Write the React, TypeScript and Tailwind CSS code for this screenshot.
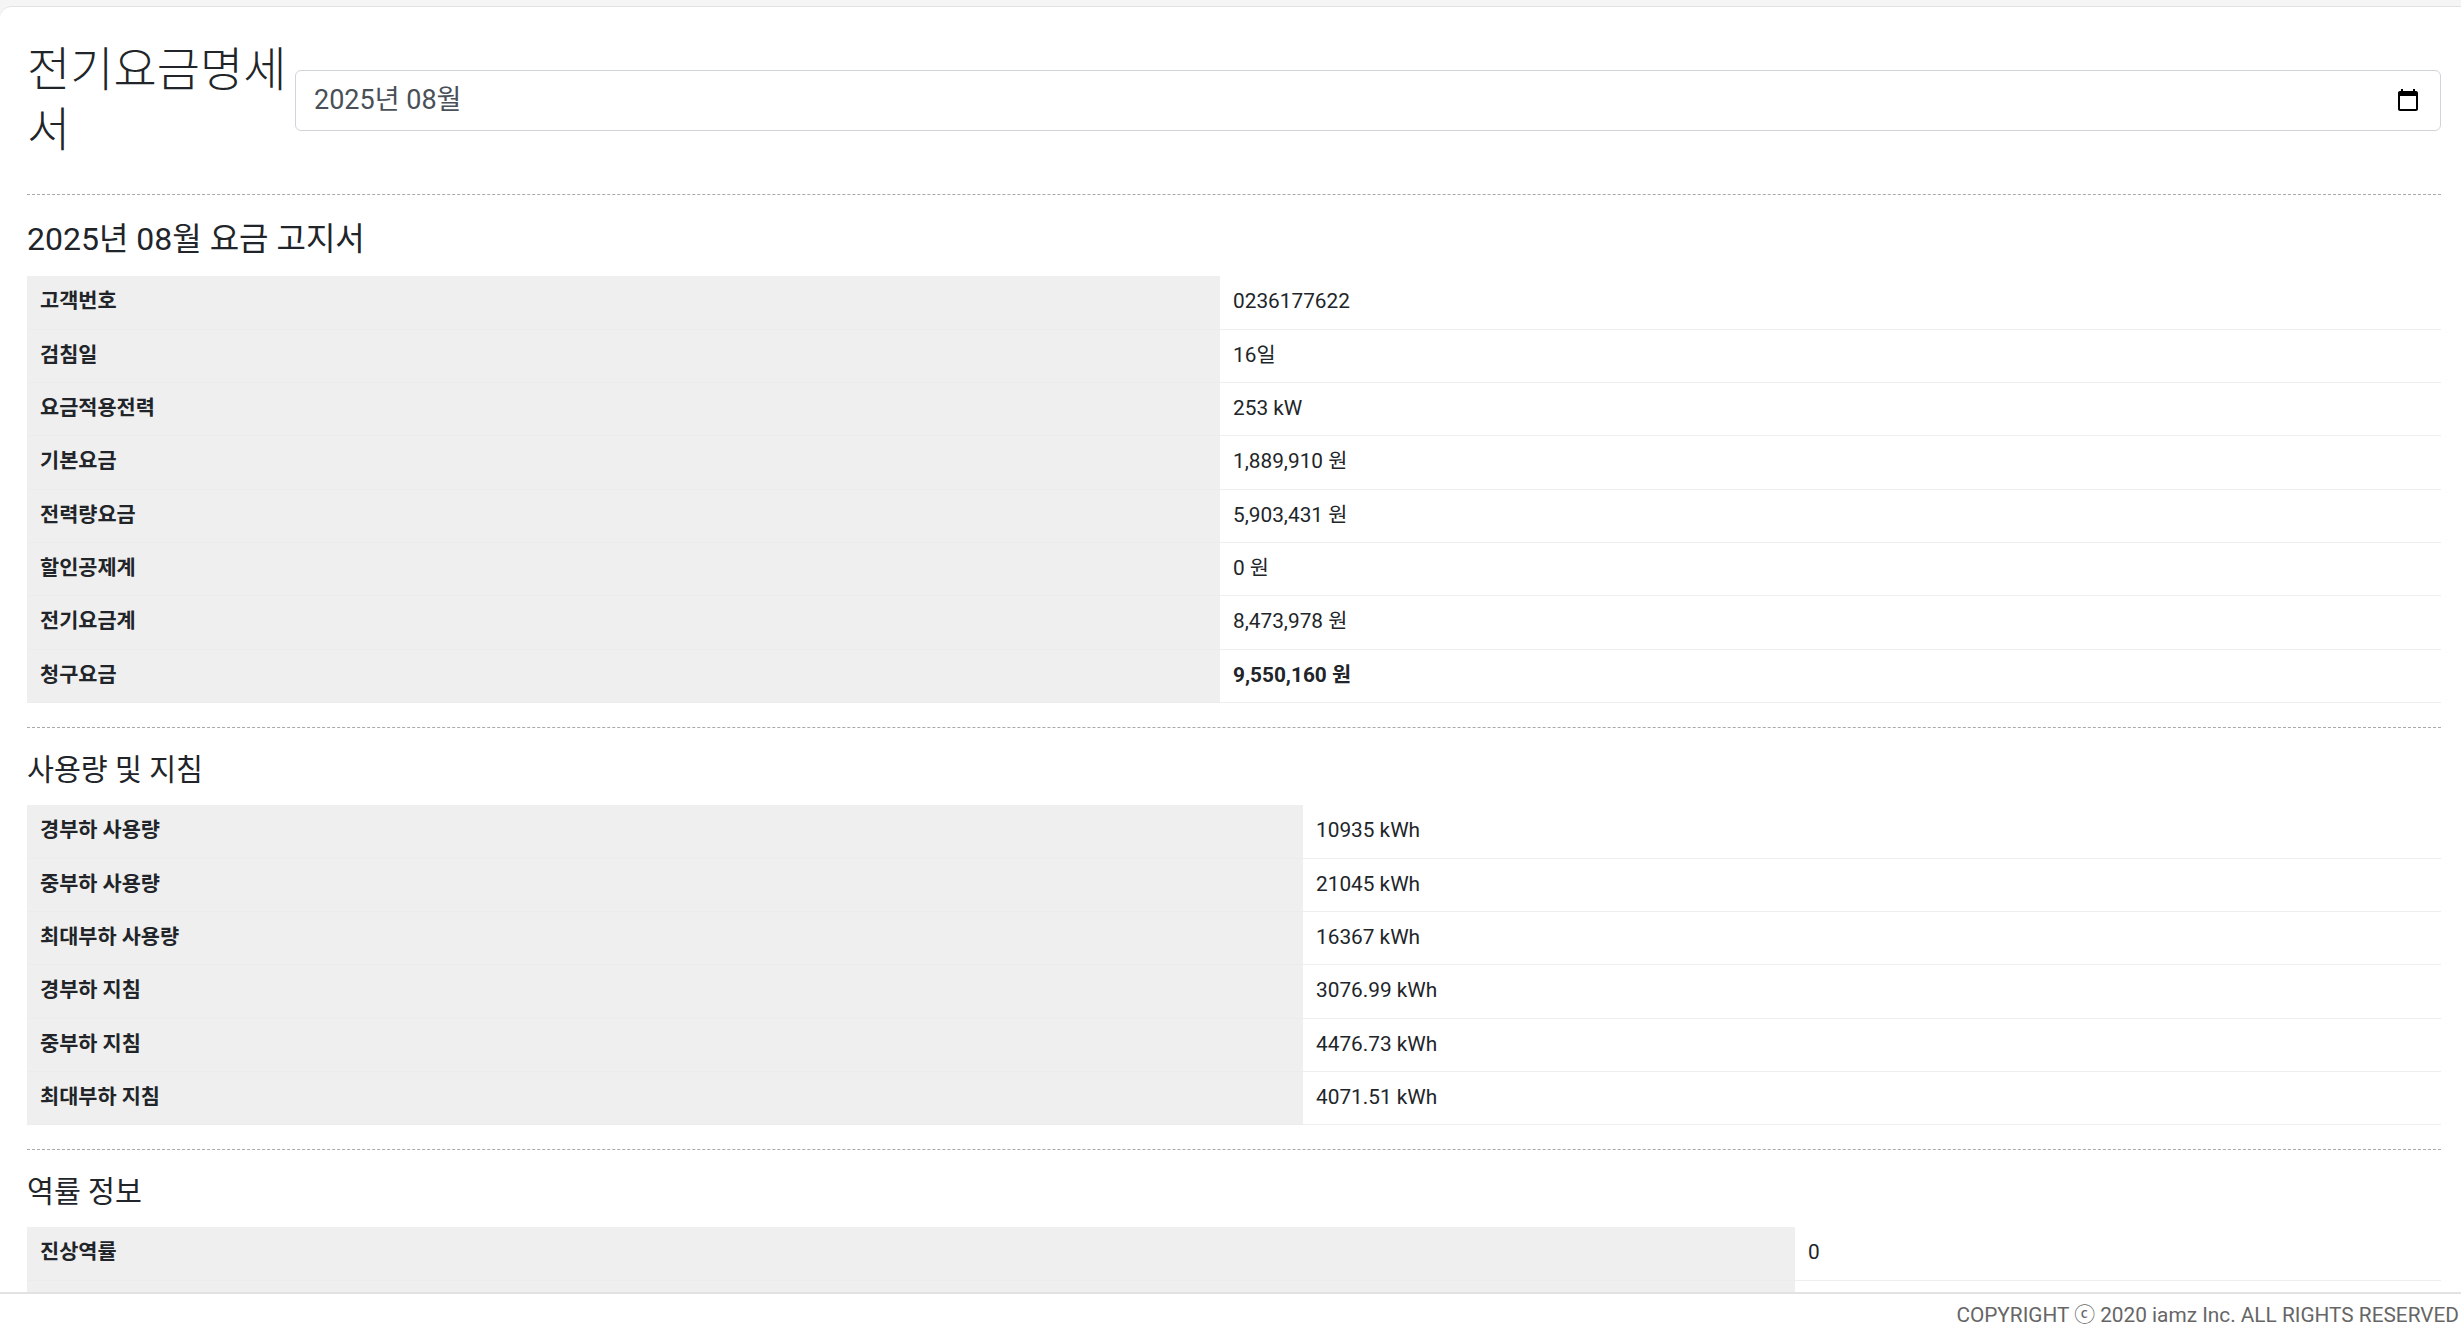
const font = "[font-family:Roboto,'Noto_Sans_CJK_KR',sans-serif]";

interface Row {
  label: string;
  value: string;
  strong?: boolean;
}

const billRows: Row[] = [
  { label: "고객번호", value: "0236177622" },
  { label: "검침일", value: "16일" },
  { label: "요금적용전력", value: "253 kW" },
  { label: "기본요금", value: "1,889,910 원" },
  { label: "전력량요금", value: "5,903,431 원" },
  { label: "할인공제계", value: "0 원" },
  { label: "전기요금계", value: "8,473,978 원" },
  { label: "청구요금", value: "9,550,160 원", strong: true },
];

const usageRows: Row[] = [
  { label: "경부하 사용량", value: "10935 kWh" },
  { label: "중부하 사용량", value: "21045 kWh" },
  { label: "최대부하 사용량", value: "16367 kWh" },
  { label: "경부하 지침", value: "3076.99 kWh" },
  { label: "중부하 지침", value: "4476.73 kWh" },
  { label: "최대부하 지침", value: "4071.51 kWh" },
];

// second row is hidden behind the footer in the screenshot
const powerRows: Row[] = [
  { label: "진상역률", value: "0" },
  { label: "", value: "" },
];

function InfoTable({ rows, labelWidth }: { rows: Row[]; labelWidth: string }) {
  return (
    <table className="w-full table-fixed border-collapse text-[20.8px] leading-[31.2px] text-[#212529]">
      <colgroup>
        <col className={labelWidth} />
        <col />
      </colgroup>
      <tbody>
        {rows.map((row, i) => (
          <tr key={i} className="h-[53.3px]">
            <th className="border-b border-[#ececec] bg-[#efefef] px-[13px] pt-[10px] pb-[11px] text-left align-top font-bold">
              {row.label}
            </th>
            <td className={`border-b border-[#eeeeee] px-[13px] pt-[10px] pb-[11px] align-top ${row.strong ? "font-bold" : "font-normal"}`}>
              {row.value}
            </td>
          </tr>
        ))}
      </tbody>
    </table>
  );
}

export default function App() {
  return (
    <div className={`flex h-screen flex-col overflow-hidden bg-[#f5f5f5] ${font}`}>
      <div className="h-[6px] shrink-0" />
      <main className="min-h-0 flex-1 overflow-hidden rounded-tl-[12px] border-t border-[#e2e2e2] bg-white pt-[33px] pr-[20px] pl-[27px]">
        <div className="flex items-center pb-[34px]">
          <h1 className="w-[268px] shrink-0 text-[47px] leading-[60px] font-light text-[#212529] [word-break:break-all]">
            전기요금명세서
          </h1>
          <div className="flex h-[61px] flex-1 items-center justify-between rounded-[6px] border border-[#ced4da] bg-white pr-[20px] pl-[18px] text-[27px] font-normal text-[#495057]">
            <span>2025년 08월</span>
            <svg viewBox="0 0 24 24" className="h-[24px] w-[24px]" fill="#000">
              <path d="M20 3h-1V1h-2v2H7V1H5v2H4c-1.1 0-2 .9-2 2v16c0 1.1.9 2 2 2h16c1.1 0 2-.9 2-2V5c0-1.1-.9-2-2-2zm0 18H4V8h16v13z" />
            </svg>
          </div>
        </div>

        <section className="border-t border-dashed border-[#aaaaaa] pb-[24px]">
          <h2 className="pt-[20px] pb-[13px] text-[32px] leading-[48px] font-normal text-[#212529]">2025년 08월 요금 고지서</h2>
          <InfoTable rows={billRows} labelWidth="w-[1193px]" />
        </section>

        <section className="border-t border-dashed border-[#aaaaaa] pb-[24px]">
          <h2 className="pt-[20px] pb-[13px] text-[29.25px] leading-[44px] font-normal text-[#212529]">사용량 및 지침</h2>
          <InfoTable rows={usageRows} labelWidth="w-[1276px]" />
        </section>

        <section className="border-t border-dashed border-[#aaaaaa]">
          <h2 className="pt-[20px] pb-[13px] text-[29.25px] leading-[44px] font-normal text-[#212529]">역률 정보</h2>
          <InfoTable rows={powerRows} labelWidth="w-[1768px]" />
        </section>
      </main>
      <footer className="flex h-[42px] shrink-0 items-center justify-end border-t-2 border-[#e2e2e2] bg-white pt-[4px] pr-[2px] text-[20.8px] font-normal text-[#666666]">
        COPYRIGHT ⓒ 2020 iamz Inc. ALL RIGHTS RESERVED
      </footer>
    </div>
  );
}
